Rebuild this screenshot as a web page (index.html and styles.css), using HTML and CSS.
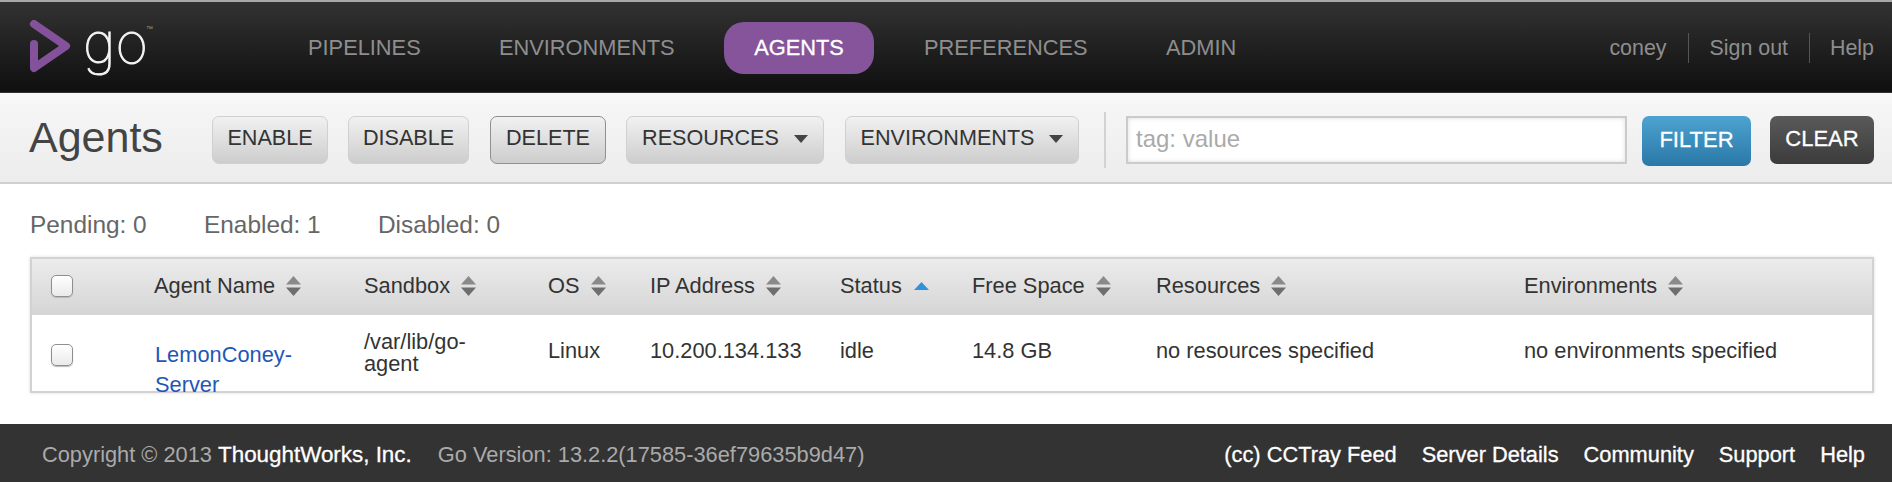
FILE: index.html
```html
<!DOCTYPE html>
<html lang="en">
<head>
<meta charset="utf-8">
<title>Agents - Go</title>
<link rel="stylesheet" href="styles.css">
</head>
<body>
<header class="topbar">
  <a class="logo" href="#">
    <svg class="logo-mark" width="52" height="60" viewBox="0 0 52 60"><path d="M6 4 L38 26 L6 48 V24" fill="none" stroke="#83529a" stroke-width="8" stroke-linejoin="round" stroke-linecap="round"/></svg>
    <span class="logo-word">go</span><span class="logo-tm">™</span>
  </a>
  <nav class="mainnav">
    <a class="navlink n-pipelines" href="#">PIPELINES</a>
    <a class="navlink n-env" href="#">ENVIRONMENTS</a>
    <a class="navlink n-agents current" href="#">AGENTS</a>
    <a class="navlink n-prefs" href="#">PREFERENCES</a>
    <a class="navlink n-admin" href="#">ADMIN</a>
  </nav>
  <div class="usernav">
    <span class="useritem first">coney</span>
    <a class="useritem" href="#">Sign out</a>
    <a class="useritem last" href="#">Help</a>
  </div>
</header>

<section class="toolbar">
  <h1 class="title">Agents</h1>
  <button class="btn b-enable">ENABLE</button>
  <button class="btn b-disable">DISABLE</button>
  <button class="btn b-delete">DELETE</button>
  <button class="btn b-res">RESOURCES<span class="caret"></span></button>
  <button class="btn b-envs">ENVIRONMENTS<span class="caret"></span></button>
  <span class="divider"></span>
  <input class="filter-input" type="text" placeholder="tag: value">
  <button class="btn-filter">FILTER</button>
  <button class="btn-clear">CLEAR</button>
</section>

<section class="stats">
  <span class="stat s1">Pending: 0</span>
  <span class="stat s2">Enabled: 1</span>
  <span class="stat s3">Disabled: 0</span>
</section>

<section class="agents">
  <div class="row head">
    <div class="cell"><input class="check" type="checkbox"></div>
    <div class="cell">Agent Name<svg class="sort" width="15" height="20" viewBox="0 0 15 20"><path d="M7.5 0 L15 8.5 H0Z" fill="#8a8a8a"/><path d="M7.5 20 L15 11.5 H0Z" fill="#6e6e6e"/></svg></div>
    <div class="cell">Sandbox<svg class="sort" width="15" height="20" viewBox="0 0 15 20"><path d="M7.5 0 L15 8.5 H0Z" fill="#8a8a8a"/><path d="M7.5 20 L15 11.5 H0Z" fill="#6e6e6e"/></svg></div>
    <div class="cell">OS<svg class="sort" width="15" height="20" viewBox="0 0 15 20"><path d="M7.5 0 L15 8.5 H0Z" fill="#8a8a8a"/><path d="M7.5 20 L15 11.5 H0Z" fill="#6e6e6e"/></svg></div>
    <div class="cell">IP Address<svg class="sort" width="15" height="20" viewBox="0 0 15 20"><path d="M7.5 0 L15 8.5 H0Z" fill="#8a8a8a"/><path d="M7.5 20 L15 11.5 H0Z" fill="#6e6e6e"/></svg></div>
    <div class="cell">Status<svg class="sort sort-active" width="15" height="8" viewBox="0 0 15 8"><path d="M7.5 0 L15 8 H0Z" fill="#2f93dc"/></svg></div>
    <div class="cell">Free Space<svg class="sort" width="15" height="20" viewBox="0 0 15 20"><path d="M7.5 0 L15 8.5 H0Z" fill="#8a8a8a"/><path d="M7.5 20 L15 11.5 H0Z" fill="#6e6e6e"/></svg></div>
    <div class="cell">Resources<svg class="sort" width="15" height="20" viewBox="0 0 15 20"><path d="M7.5 0 L15 8.5 H0Z" fill="#8a8a8a"/><path d="M7.5 20 L15 11.5 H0Z" fill="#6e6e6e"/></svg></div>
    <div class="cell">Environments<svg class="sort" width="15" height="20" viewBox="0 0 15 20"><path d="M7.5 0 L15 8.5 H0Z" fill="#8a8a8a"/><path d="M7.5 20 L15 11.5 H0Z" fill="#6e6e6e"/></svg></div>
  </div>
  <div class="row body">
    <div class="cell cell-check"><input class="check" type="checkbox"></div>
    <div class="cell name"><a href="#">LemonConey-Server</a></div>
    <div class="cell sandbox">/var/lib/go-agent</div>
    <div class="cell">Linux</div>
    <div class="cell">10.200.134.133</div>
    <div class="cell">idle</div>
    <div class="cell">14.8 GB</div>
    <div class="cell">no resources specified</div>
    <div class="cell">no environments specified</div>
  </div>
</section>

<footer class="footer">
  <div class="foot-left">
    <span class="copy">Copyright © 2013 <a href="#">ThoughtWorks, Inc.</a></span>
    <span class="version">Go Version: 13.2.2(17585-36ef79635b9d47)</span>
  </div>
  <nav class="foot-right">
    <a href="#">(cc) CCTray Feed</a>
    <a href="#">Server Details</a>
    <a href="#">Community</a>
    <a href="#">Support</a>
    <a href="#">Help</a>
  </nav>
</footer>
</body>
</html>
```

FILE: styles.css
```css
* { box-sizing: border-box; }
html, body { margin: 0; padding: 0; }
body {
  width: 1892px;
  height: 482px;
  overflow: hidden;
  background: #fff;
  font-family: "Liberation Sans", Arial, sans-serif;
  font-size: 20px;
  color: #333;
}
a { text-decoration: none; color: inherit; }

/* top bar */
.topbar {
  height: 93px;
  display: flex;
  align-items: center;
  background: linear-gradient(#323232, #0f0f0f);
  border-top: 2px solid #a8a8a8;
  border-bottom: 1px solid #333;
  padding-left: 28px;
}
.logo { display: flex; align-items: flex-start; width: 281px; height: 60px; margin-top: -2px; }
.logo-mark { flex: none; margin-top: 4px; }
.logo-word {
  font-family: Inter, sans-serif;
  font-weight: 100;
  font-size: 56px;
  line-height: 60px;
  color: #f4f4f4;
  margin-left: 3px;
  margin-top: -3px;
  -webkit-text-stroke: 1px #f4f4f4;
}
.logo-tm { font-size: 7px; color: #999; margin-top: 9px; margin-left: -2px; }

.mainnav { display: flex; align-items: center; margin-top: 2px; }
.navlink {
  font-size: 21.8px;
  color: #8e8e8e;
  line-height: 52px;
  height: 52px;
}
.n-pipelines { width: 190px; margin-left: -1px; }
.n-env { width: 225px; margin-left: 1px; }
.n-agents.current {
  width: 150px;
  text-align: center;
  background: #85549a;
  color: #fff;
  border-radius: 20px;
  -webkit-text-stroke: 0.3px #fff;
}
.n-prefs { width: 242px; margin-left: 50px; }

.usernav { margin-left: auto; display: flex; align-items: center; padding-right: 18px; font-size: 21.4px; color: #8e8e8e; margin-top: 2px; }
.useritem { padding: 0 21px; line-height: 30px; border-left: 1px solid #555; }
.useritem.first { border-left: 0; }
.useritem.last { padding: 0 0 0 20px; }

/* toolbar */
.toolbar {
  height: 91px;
  display: flex;
  align-items: flex-start;
  padding-top: 23px;
  padding-left: 29px;
  background: linear-gradient(#f7f7f7, #ececec);
  border-bottom: 2px solid #cfcfcf;
}
.title {
  margin: -2px 0 0;
  width: 183px;
  font-weight: normal;
  font-size: 43px;
  line-height: 46px;
  color: #444;
}
.btn {
  height: 48px;
  margin: 0 20px 0 0;
  padding: 0 0 4px;
  font-family: inherit;
  font-size: 21.6px;
  color: #333;
  border: 1px solid #d0d0d0;
  border-radius: 7px;
  background: linear-gradient(#f1f1f1, #cdcdcd);
}
.b-enable { width: 116px; }
.b-disable { width: 121px; margin-right: 21px; }
.b-delete { width: 116px; border-color: #909090; }
.b-res { width: 198px; margin-right: 21px; }
.b-envs { width: 234px; margin-right: 25px; }
.caret {
  display: inline-block;
  margin-left: 15px;
  vertical-align: 2px;
  border-left: 7px solid transparent;
  border-right: 7px solid transparent;
  border-top: 8px solid #444;
}
.divider { width: 2px; height: 56px; margin-top: -4px; background: #d2d2d2; margin-right: 20px; }
.filter-input {
  width: 501px;
  height: 48px;
  padding: 0 8px 2px;
  font-family: inherit;
  font-size: 24px;
  border: 2px solid #cbcbcb;
  background: #fff;
  box-shadow: inset 0 0 5px #ddd;
  outline: 0;
  margin-right: 15px;
}
.filter-input::placeholder { color: #aaa; opacity: 1; }
.btn-filter, .btn-clear {
  padding: 0 0 3px;
  font-family: inherit;
  font-size: 22px;
  color: #fff;
  border: 0;
  border-radius: 7px;
  -webkit-text-stroke: 0.3px #fff;
}
.btn-filter { width: 109px; height: 50px; background: linear-gradient(#4da3d0, #2a78a8); margin-right: 19px; }
.btn-clear { width: 104px; height: 48px; background: linear-gradient(#5a5a5a, #3b3b3b); }

/* stats */
.stats { display: flex; height: 73px; padding: 27px 0 0 30px; font-size: 24.4px; line-height: 28px; color: #666; }
.stat { display: block; }
.s1 { width: 174px; }
.s2 { width: 174px; }

/* table */
.agents {
  margin-left: 30px;
  width: 1844px;
  height: 136px;
  border: 2px solid #d2d2d2;
  box-shadow: 0 0 3px #ddd;
}
.row {
  display: grid;
  grid-template-columns: 122px 210px 184px 102px 190px 132px 184px 368px 1fr;
}
.head { height: 56px; align-items: center; background: linear-gradient(#ececec, #d5d5d5); }
.body { height: 76px; align-items: center; background: #fff; }
.cell { display: flex; align-items: center; color: #333; font-size: 21.8px; }
.head .cell { padding-bottom: 2px; }
.body .cell { padding-bottom: 5px; line-height: 22px; }
.body .cell-check { padding-bottom: 0; padding-top: 4px; }
.check {
  appearance: none;
  -webkit-appearance: none;
  width: 22px;
  height: 22px;
  margin: 0 0 0 19px;
  border: 1px solid #8f8f8f;
  border-radius: 5px;
  background: linear-gradient(#fff, #eaeaea);
  box-shadow: 0 1px 1px #bbb;
}
.sort { margin-left: 11px; flex: none; }
.sort-active { margin-left: 12px; }
.body .name { display: block; width: 160px; line-height: 30px; padding: 25px 0 0 1px; height: 76px; align-self: start; }
.name a { color: #1f56b8; }
.body .sandbox { display: block; width: 140px; padding-bottom: 1px; }

/* footer */
.footer {
  margin-top: 31px;
  height: 58px;
  display: flex;
  align-items: center;
  justify-content: space-between;
  background: #333;
  font-size: 21.8px;
  padding: 3px 27px 0 42px;
  color: #aaa;
}
.copy a { color: #fff; font-size: 22.4px; -webkit-text-stroke: 0.3px #fff; }
.version { margin-left: 20px; }
.foot-right { display: flex; gap: 25px; color: #fff; -webkit-text-stroke: 0.3px #fff; }
```
